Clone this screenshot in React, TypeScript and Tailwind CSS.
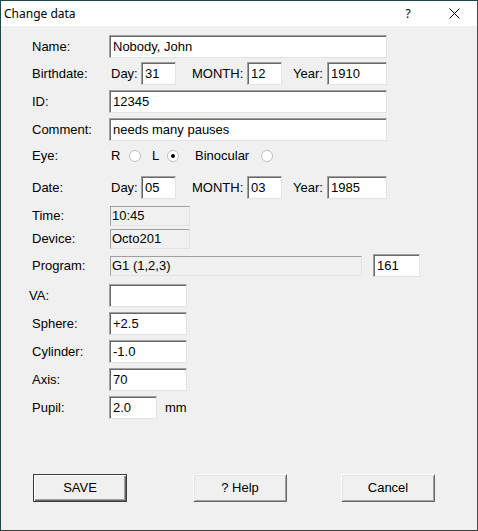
import React from "react";

const Field = ({ value = "", className = "" }: { value?: string; className?: string }) => (
  <div
    className={`h-[23px] bg-white flex items-center pl-[3px] border border-t-[#a0a0a0] border-l-[#a0a0a0] border-b-[#e3e3e3] border-r-[#e3e3e3] shadow-[inset_1px_1px_0_#696969] ${className}`}
  >
    {value}
  </div>
);

const ReadOnly = ({ value, className = "" }: { value: string; className?: string }) => (
  <div
    className={`h-[20px] bg-[#f0f0f0] flex items-center pl-[1px] border border-t-[#a0a0a0] border-l-[#a0a0a0] border-b-[#e3e3e3] border-r-[#e3e3e3] ${className}`}
  >
    {value}
  </div>
);

const Radio = ({ checked = false }: { checked?: boolean }) => (
  <div className="w-[12px] h-[12px] rounded-full bg-white border border-[#c0c0c0] flex items-center justify-center">
    {checked && <div className="w-[4px] h-[4px] rounded-full bg-black" />}
  </div>
);

const DateRow = ({ day, month, year }: { day: string; month: string; year: string }) => (
  <div className="flex items-center">
    <span className="w-[32px] pl-[2px]">Day:</span>
    <Field value={day} className="w-[35px]" />
    <span className="w-[71px] pl-[16px]">MONTH:</span>
    <Field value={month} className="w-[35px]" />
    <span className="w-[45px] pl-[11px]">Year:</span>
    <Field value={year} className="w-[60px]" />
  </div>
);

const Button = ({ label, primary = false }: { label: string; primary?: boolean }) => (
  <div
    className={`w-[94px] h-[28px] flex items-center justify-center bg-[#f0f0f0] border ${
      primary
        ? "border-[#3c3c3c] shadow-[inset_1px_1px_0_#ffffff,inset_-1px_-1px_0_#696969,inset_-2px_-2px_0_#a0a0a0]"
        : "border-t-[#ffffff] border-l-[#ffffff] border-b-[#696969] border-r-[#696969] shadow-[inset_1px_1px_0_#e3e3e3,inset_-1px_-1px_0_#a0a0a0]"
    }`}
  >
    {label}
  </div>
);

export default function App() {
  return (
    <div className="w-[478px] h-[531px] flex flex-col bg-[#f0f0f0] border border-l-[#1d4747] border-t-[#1d4747] border-b-[#3c3c3c] border-r-[#4a4a4a] text-[13px] text-black font-['Liberation_Sans',Arial,sans-serif]">
      <div className="h-[25px] bg-white flex items-center font-['Noto_Sans',sans-serif] text-[12px]">
        <span className="pl-[3px] flex-1">Change data</span>
        <div className="w-[46px] flex justify-center">?</div>
        <div className="w-[46px] flex justify-center">
          <svg width="11" height="11" viewBox="0 0 11 11">
            <path d="M0.5 0.5L10.5 10.5M10.5 0.5L0.5 10.5" stroke="#000" strokeWidth="1" />
          </svg>
        </div>
      </div>

      <div className="flex flex-col pl-[31px] pt-[9px]">
        <div className="flex items-center">
          <span className="w-[77px]">Name:</span>
          <Field value="Nobody, John" className="w-[278px]" />
        </div>
        <div className="flex items-center mt-[4px]">
          <span className="w-[77px]">Birthdate:</span>
          <DateRow day="31" month="12" year="1910" />
        </div>
        <div className="flex items-center mt-[5px]">
          <span className="w-[77px]">ID:</span>
          <Field value="12345" className="w-[278px]" />
        </div>
        <div className="flex items-center mt-[5px]">
          <span className="w-[77px]">Comment:</span>
          <Field value="needs many pauses" className="w-[278px]" />
        </div>
        <div className="flex items-center h-[21px] mt-[4px]">
          <span className="w-[77px]">Eye:</span>
          <span className="w-[20px] pl-[2px]">R</span>
          <Radio />
          <span className="w-[26px] pl-[11px]">L</span>
          <Radio checked />
          <span className="w-[82px] pl-[16px]">Binocular</span>
          <Radio />
        </div>
        <div className="flex items-center mt-[10px]">
          <span className="w-[77px]">Date:</span>
          <DateRow day="05" month="03" year="1985" />
        </div>
        <div className="flex items-center mt-[7px]">
          <span className="w-[78px]">Time:</span>
          <ReadOnly value="10:45" className="w-[80px]" />
        </div>
        <div className="flex items-center mt-[3px]">
          <span className="w-[78px]">Device:</span>
          <ReadOnly value="Octo201" className="w-[80px]" />
        </div>
        <div className="flex items-center mt-[5px]">
          <span className="w-[78px]">Program:</span>
          <ReadOnly value="G1 (1,2,3)" className="w-[252px]" />
          <Field value="161" className="w-[47px] ml-[11px]" />
        </div>
        <div className="flex items-center mt-[7px]">
          <span className="w-[77px]">
            <span className="-ml-[3px]">VA:</span>
          </span>
          <Field className="w-[78px]" />
        </div>
        <div className="flex items-center mt-[5px]">
          <span className="w-[77px]">Sphere:</span>
          <Field value="+2.5" className="w-[78px]" />
        </div>
        <div className="flex items-center mt-[5px]">
          <span className="w-[77px]">Cylinder:</span>
          <Field value="-1.0" className="w-[78px]" />
        </div>
        <div className="flex items-center mt-[5px]">
          <span className="w-[77px]">Axis:</span>
          <Field value="70" className="w-[78px]" />
        </div>
        <div className="flex items-center mt-[5px]">
          <span className="w-[77px]">Pupil:</span>
          <Field value="2.0" className="w-[48px]" />
          <span className="ml-[8px]">mm</span>
        </div>

        <div className="flex items-center mt-[55px] ml-[1px]">
          <Button label="SAVE" primary />
          <div className="ml-[66px]">
            <Button label="? Help" />
          </div>
          <div className="ml-[54px]">
            <Button label="Cancel" />
          </div>
        </div>
      </div>
    </div>
  );
}
